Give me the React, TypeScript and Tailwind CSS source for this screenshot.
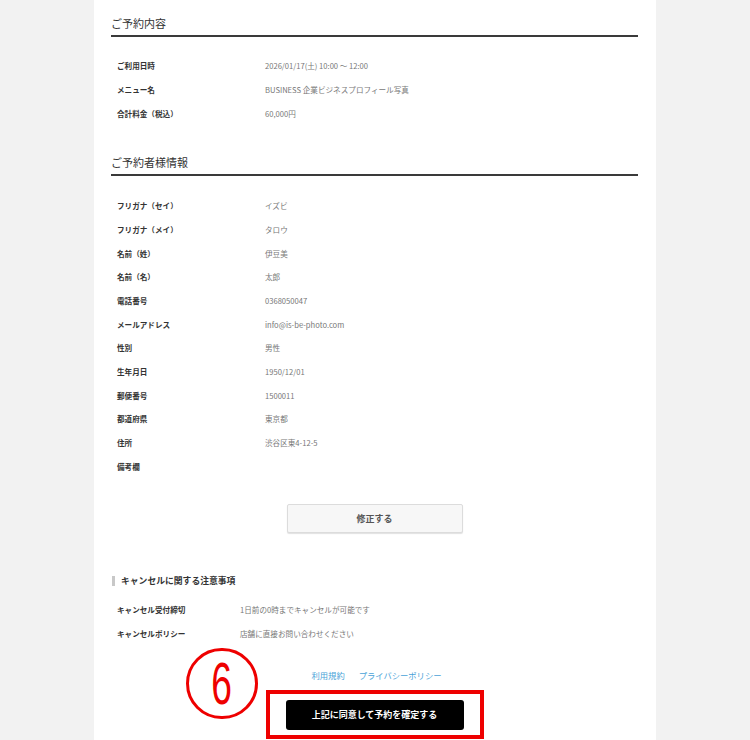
import React from "react";

const font = { fontFamily: '"Noto Sans CJK JP", "Noto Sans", sans-serif' };

function Row({ label, value, labelW }: { label: string; value: string; labelW: string }) {
  return (
    <div className="flex h-[23.7px] items-center pl-[6px]">
      <div className={`${labelW} shrink-0 text-[7.6px] font-bold text-[#333]`}>{label}</div>
      <div className="text-[7.6px] text-[#777]">{value}</div>
    </div>
  );
}

function Heading({ children, pt }: { children: React.ReactNode; pt: string }) {
  return (
    <div className={`${pt} border-b-2 border-[#3a3a3a] pb-[4px] text-[11px] leading-[15px] text-[#333]`}>
      {children}
    </div>
  );
}

export default function App() {
  const reservation = [
    ["ご利用日時", "2026/01/17(土) 10:00 ～ 12:00"],
    ["メニュー名", "BUSINESS 企業ビジネスプロフィール写真"],
    ["合計料金（税込）", "60,000円"],
  ];
  const customer = [
    ["フリガナ（セイ）", "イズビ"],
    ["フリガナ（メイ）", "タロウ"],
    ["名前（姓）", "伊豆美"],
    ["名前（名）", "太郎"],
    ["電話番号", "0368050047"],
    ["メールアドレス", "info@is-be-photo.com"],
    ["性別", "男性"],
    ["生年月日", "1950/12/01"],
    ["郵便番号", "1500011"],
    ["都道府県", "東京都"],
    ["住所", "渋谷区東4-12-5"],
    ["備考欄", ""],
  ];
  return (
    <div className="min-h-[740px] w-[750px] bg-[#f2f2f2]" style={font}>
      <div className="relative mx-auto min-h-[740px] w-[562px] bg-white pl-[17px] pr-[18px]">
        <Heading pt="pt-[16px]">ご予約内容</Heading>
        <div className="mt-[17px]">
          {reservation.map(([l, v]) => (
            <Row key={l} label={l} value={v} labelW="w-[148px]" />
          ))}
        </div>

        <div className="mt-[30px]">
          <Heading pt="pt-0">ご予約者様情報</Heading>
        </div>
        <div className="mt-[18px]">
          {customer.map(([l, v]) => (
            <Row key={l} label={l} value={v} labelW="w-[148px]" />
          ))}
        </div>

        <div className="mt-[26px] flex justify-center">
          <button className="h-[29px] w-[176px] rounded-[2px] border border-[#dcdcdc] bg-[#f7f7f7] text-[9px] font-bold text-[#555] shadow-[0_1px_1px_rgba(0,0,0,0.12)]">
            修正する
          </button>
        </div>

        <div className="mt-[42px] flex items-center">
          <div className="ml-[1px] h-[10px] w-[3px] bg-[#c8c8c8]" />
          <div className="ml-[6px] text-[8.8px] font-bold leading-[12px] text-[#333]">
            キャンセルに関する注意事項
          </div>
        </div>
        <div className="mt-[10px]">
          <div className="flex h-[24.5px] items-center pl-[6px]">
            <div className="w-[123px] shrink-0 text-[7.6px] font-bold text-[#333]">キャンセル受付締切</div>
            <div className="text-[7.6px] text-[#777]">1日前の0時までキャンセルが可能です</div>
          </div>
          <div className="flex h-[24.5px] items-center pl-[6px]">
            <div className="w-[123px] shrink-0 text-[7.6px] font-bold text-[#333]">キャンセルポリシー</div>
            <div className="text-[7.6px] text-[#777]">店舗に直接お問い合わせください</div>
          </div>
        </div>

        <div className="relative mt-[23px]">
          <div className="flex justify-center gap-[14px] text-[8.3px] leading-[12px] text-[#4aa3d8]">
            <span className="ml-[4px]">利用規約</span>
            <span>プライバシーポリシー</span>
          </div>
          <div className="mt-[9px] flex justify-center">
            <div className="border-[4px] border-[#ee0000] px-[16px] pb-[5px] pt-[5px]">
              <button className="h-[30px] w-[178px] rounded-[3px] bg-black text-[9px] font-bold text-white">
                上記に同意して予約を確定する
              </button>
            </div>
          </div>
          <div className="absolute left-[75px] top-[-21px] flex h-[71px] w-[72px] items-center justify-center rounded-full border-[3.5px] border-[#ee0000]">
            <span
              className="scale-x-[0.62] text-[60px] leading-none text-[#ee0000]"
              style={{ fontFamily: '"Liberation Sans", Arial, sans-serif' }}
            >
              6
            </span>
          </div>
        </div>
      </div>
    </div>
  );
}
